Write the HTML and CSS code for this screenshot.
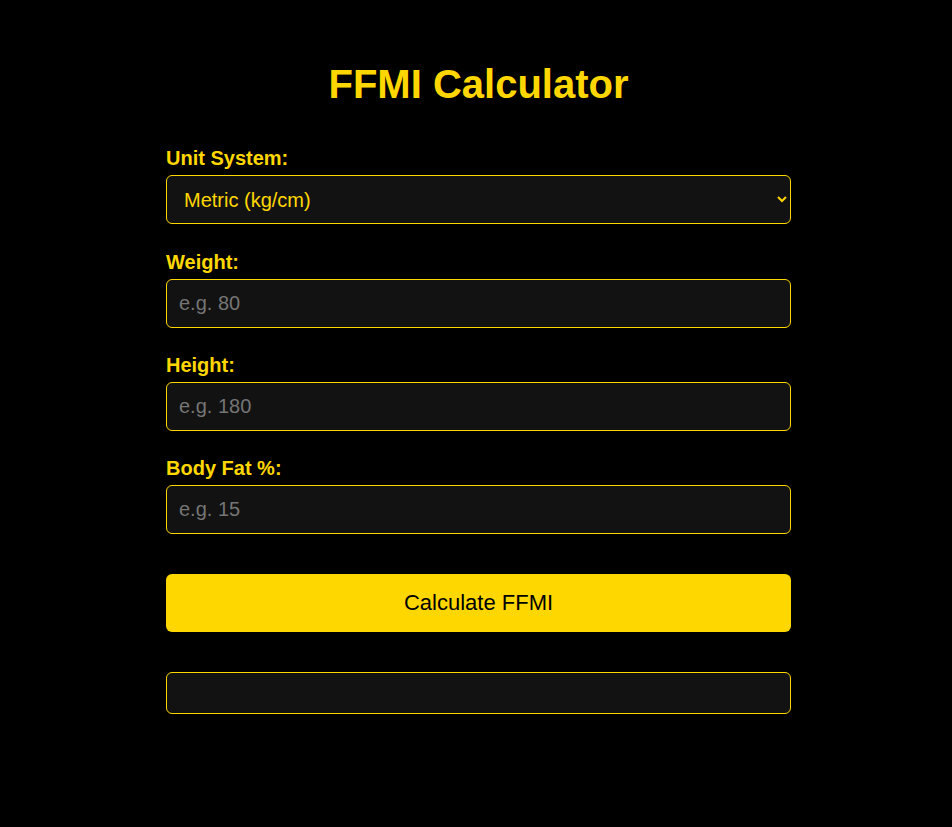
FILE: index.html
```html
<!DOCTYPE html>
<html lang="en">
<head>
<meta charset="utf-8">
<title>FFMI Calculator</title>
<link rel="stylesheet" href="styles.css">
</head>
<body>
<main class="container">
  <h1 class="title">FFMI Calculator</h1>
  <div class="form-group form-group-first">
    <label class="label" for="unit">Unit System:</label>
    <select class="field select" id="unit">
      <option>Metric (kg/cm)</option>
      <option>Imperial (lb/in)</option>
    </select>
  </div>
  <div class="form-group">
    <label class="label" for="weight">Weight:</label>
    <input class="field" id="weight" type="number" placeholder="e.g. 80">
  </div>
  <div class="form-group">
    <label class="label" for="height">Height:</label>
    <input class="field" id="height" type="number" placeholder="e.g. 180">
  </div>
  <div class="form-group">
    <label class="label" for="bodyfat">Body Fat %:</label>
    <input class="field" id="bodyfat" type="number" placeholder="e.g. 15">
  </div>
  <button class="btn" type="button">Calculate FFMI</button>
  <div class="result"></div>
</main>
</body>
</html>
```

FILE: styles.css
```css
* {
  box-sizing: border-box;
}

html, body {
  margin: 0;
  background: #000;
}

body {
  padding: 0 0 0 5px;
  font-family: "Liberation Sans", Arial, sans-serif;
  color: #ffd700;
}

.container {
  width: 625px;
  margin: 0 auto;
  padding-top: 40px;
  padding-bottom: 40px;
}

.title {
  margin: 21px 0 40px;
  font-size: 40px;
  line-height: 46px;
  font-weight: bold;
  text-align: center;
  color: #ffd700;
}

.form-group {
  margin-bottom: 26px;
}

.form-group-first {
  margin-bottom: 27px;
}

.label {
  display: block;
  font-size: 20px;
  line-height: 22px;
  font-weight: bold;
  margin-bottom: 6px;
  color: #ffd700;
}

.field {
  display: block;
  width: 100%;
  height: 49px;
  padding: 12px;
  font-family: "Liberation Sans", Arial, sans-serif;
  font-size: 20px;
  color: #ffd700;
  background: #121212;
  border: 1px solid #ffd700;
  border-radius: 6px;
  outline: none;
}

.field::placeholder {
  color: #757575;
}

.select {
  padding-left: 13px;
  padding-right: 8px;
}

.btn {
  display: block;
  width: 100%;
  height: 58px;
  margin-top: 40px;
  padding: 0;
  font-family: "Liberation Sans", Arial, sans-serif;
  font-size: 22px;
  color: #000;
  background: #ffd700;
  border: none;
  border-radius: 6px;
}

.result {
  margin-top: 40px;
  height: 42px;
  padding: 20px;
  background: #121212;
  border: 1px solid #ffd700;
  border-radius: 6px;
}
```
